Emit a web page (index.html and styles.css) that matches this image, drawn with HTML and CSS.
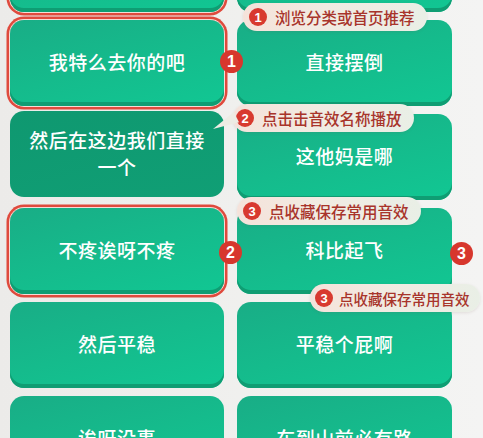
FILE: index.html
```html
<!DOCTYPE html>
<html lang="zh">
<head>
<meta charset="utf-8">
<link rel="stylesheet" href="styles.css">
</head>
<body>
<div class="page">
  <div class="grid">
    <div class="card selected"></div>
    <div class="card"></div>
    <div class="card selected">我特么去你的吧</div>
    <div class="card">直接摆倒</div>
    <div class="card pressed">然后在这边我们直接一个</div>
    <div class="card">这他妈是哪</div>
    <div class="card selected">不疼诶呀不疼</div>
    <div class="card">科比起飞</div>
    <div class="card">然后平稳</div>
    <div class="card">平稳个屁啊</div>
    <div class="card">诶呀没事</div>
    <div class="card">车到山前必有路</div>
  </div>

  <div class="pill p1"><span class="dot">1</span>浏览分类或首页推荐</div>
  <div class="pill p2"><span class="dot">2</span>点击击音效名称播放</div>
  <div class="pill p3a"><span class="dot">3</span>点收藏保存常用音效</div>
  <div class="pill p3b"><span class="dot">3</span>点收藏保存常用音效</div>

  <span class="badge b1">1</span>
  <span class="badge b2">2</span>
  <span class="badge b3">3</span>
</div>
</body>
</html>
```

FILE: styles.css
```css
html, body {
  margin: 0;
  padding: 0;
}
body {
  background: linear-gradient(90deg, #ecebe9 0%, #f1f1ef 60%, #f4f4f3 100%);
  font-family: "Noto Sans CJK SC", "Noto Sans", sans-serif;
  width: 483px;
  height: 438px;
  overflow: hidden;
}
.page {
  position: relative;
  width: 483px;
  height: 438px;
  overflow: hidden;
}
.grid {
  display: grid;
  grid-template-columns: 214px 215px;
  grid-auto-rows: 86px;
  column-gap: 13px;
  row-gap: 8px;
  padding-left: 10px;
  margin-top: -74px;
}
.card {
  box-sizing: border-box;
  border-radius: 14px;
  background: linear-gradient(165deg, #19ad86 0%, #15bb8c 50%, #11c793 100%);
  box-shadow: inset 0 -4px 0 #0f9d73;
  color: #ffffff;
  font-size: 19px;
  font-weight: 500;
  letter-spacing: 0.5px;
  line-height: 27px;
  display: flex;
  align-items: center;
  justify-content: center;
  text-align: center;
  padding: 0 16px 4px;
}
.card.selected {
  box-shadow: inset 0 -4px 0 #0f9d73, 0 0 0 1px #f4dcd6, 0 0 0 3.5px #df4a3d;
}
.card.pressed {
  background: linear-gradient(165deg, #0f9870 0%, #109f75 100%);
  box-shadow: none;
  padding-bottom: 2px;
  transform: translateY(-3px);
}
.pill {
  position: absolute;
  height: 28px;
  box-sizing: border-box;
  border-radius: 14px;
  background: linear-gradient(90deg, #f5e2da 0%, #f1ebe2 45%, #e9efe6 100%);
  box-shadow: 0 1px 3px rgba(120, 90, 80, 0.15);
  color: #a8342b;
  font-size: 15.5px;
  font-weight: 500;
  display: flex;
  align-items: center;
  gap: 8px;
  padding: 0 12px 0 6px;
  white-space: nowrap;
}
.dot {
  width: 18px;
  height: 18px;
  border-radius: 50%;
  background: #d8392f;
  color: #ffffff;
  font-family: "Liberation Sans", "DejaVu Sans", sans-serif;
  font-size: 13px;
  font-weight: 700;
  display: flex;
  align-items: center;
  justify-content: center;
  flex: none;
}
.p1 { left: 243px; top: 3px; }
.p2 { left: 233px; top: 104px; padding-left: 3px; }
.p2::before {
  content: "";
  position: absolute;
  left: -20px;
  top: 8px;
  width: 26px;
  height: 17px;
  background: #edece4;
  clip-path: polygon(0 100%, 80% 0, 100% 60%);
}
.p3a { left: 237px; top: 197px; }
.p3b {
  left: 310px;
  top: 284px;
  padding-left: 5px;
  padding-right: 10px;
  gap: 6px;
  font-size: 14.5px;
}
.badge {
  position: absolute;
  width: 23px;
  height: 23px;
  border-radius: 50%;
  background: #d7372d;
  color: #ffffff;
  font-family: "Liberation Sans", "DejaVu Sans", sans-serif;
  font-size: 16px;
  font-weight: 700;
  display: flex;
  align-items: center;
  justify-content: center;
}
.b1 { left: 220px; top: 50px; }
.b2 { left: 219px; top: 241px; }
.b3 { left: 450px; top: 242px; }
```
